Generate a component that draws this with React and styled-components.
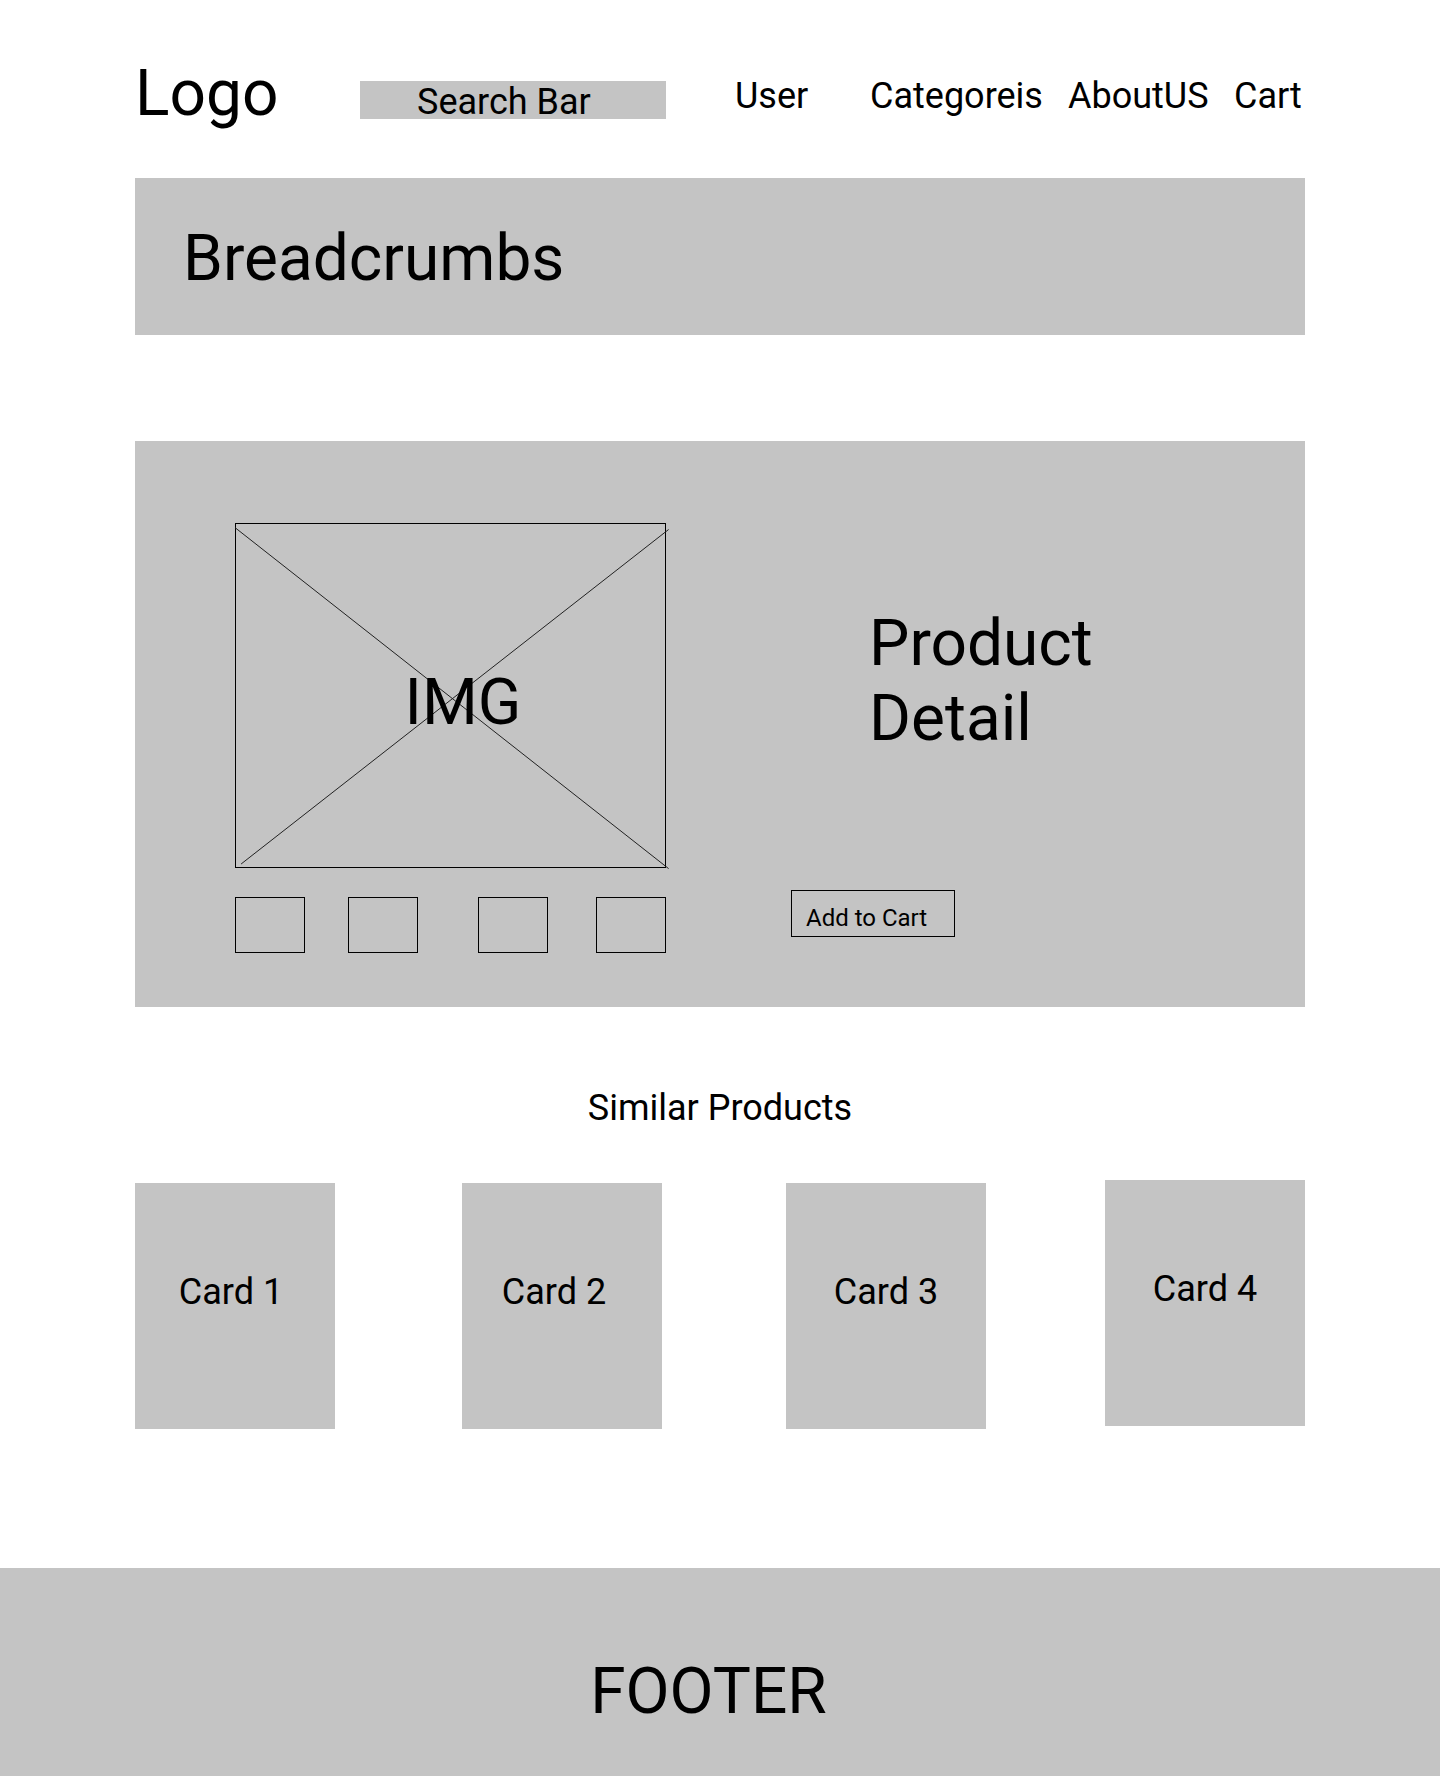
import React from "react";
import styled, { createGlobalStyle } from "styled-components";

const GRAY = "#c4c4c4";

const GlobalStyle = createGlobalStyle`
  html, body { margin: 0; padding: 0; background: #ffffff; }
  body {
    font-family: Roboto, "Liberation Sans", Arial, sans-serif;
    font-weight: 400;
    color: #000000;
  }
  *, *::before, *::after { box-sizing: border-box; }
`;

const Page = styled.div`
  width: 1440px;
  min-height: 1776px;
  display: flex;
  flex-direction: column;
`;

const Container = styled.main`
  width: 1170px;
  margin: 0 auto;
  display: flex;
  flex-direction: column;
`;

const Header = styled.header`
  height: 178px;
  padding-top: 56px;
  display: flex;
  align-items: flex-start;
`;

const Logo = styled.div`
  width: 225px;
  font-size: 64px;
  line-height: 75px;
`;

const SearchBar = styled.div`
  width: 306px;
  height: 38px;
  margin-top: 25px;
  padding-left: 57px;
  background: ${GRAY};
  font-size: 36px;
  line-height: 42px;
  white-space: nowrap;
`;

const Nav = styled.nav`
  margin-left: 69px;
  margin-top: 19px;
  display: grid;
  grid-template-columns: 135px 198px 166px auto;
  font-size: 36px;
  line-height: 42px;
  white-space: nowrap;
`;

const NavLink = styled.span``;

const Breadcrumbs = styled.div`
  height: 157px;
  padding: 43px 0 0 48px;
  background: ${GRAY};
  font-size: 64px;
  line-height: 75px;
`;

const ProductSection = styled.section`
  margin-top: 106px;
  height: 566px;
  padding: 82px 0 0 100px;
  background: ${GRAY};
  display: flex;
  align-items: flex-start;
`;

const Gallery = styled.div`
  width: 431px;
  display: flex;
  flex-direction: column;
`;

const ImageBox = styled.div`
  position: relative;
  width: 431px;
  height: 345px;
  border: 1px solid #000;
  display: flex;
  align-items: center;
  justify-content: center;
  padding: 13px 0 0 25px;
  font-size: 64px;
  line-height: 75px;
`;

const Cross = styled.svg`
  position: absolute;
  left: -1px;
  top: -1px;
  width: 436px;
  height: 347px;
  overflow: visible;
  pointer-events: none;
`;

const ImgLabel = styled.span`
  position: relative;
`;

const Thumbs = styled.div`
  display: flex;
  margin-top: 29px;
`;

const Thumb = styled.div`
  width: 70px;
  height: 56px;
  border: 1px solid #000;
  margin-left: ${(p) => p.$ml}px;
`;

const Info = styled.div`
  margin-left: 125px;
  display: flex;
  flex-direction: column;
  align-items: flex-start;
`;

const Title = styled.h1`
  margin: 83px 0 0 78px;
  width: 260px;
  font-size: 64px;
  line-height: 75px;
  font-weight: 400;
`;

const AddButton = styled.button`
  margin-top: 134px;
  width: 164px;
  height: 47px;
  padding: 8px 0 0 14px;
  border: 1px solid #000;
  background: transparent;
  color: #000;
  font-family: inherit;
  font-size: 24px;
  line-height: 28px;
  text-align: left;
  cursor: pointer;
`;

const SectionTitle = styled.h2`
  margin: 80px 0 0;
  font-size: 36px;
  line-height: 42px;
  font-weight: 400;
  text-align: center;
`;

const CardRow = styled.div`
  margin-top: 54px;
  display: flex;
  align-items: flex-start;
`;

const Card = styled.div`
  width: 200px;
  height: 246px;
  margin-left: ${(p) => p.$ml}px;
  margin-top: ${(p) => (p.$lift ? -3 : 0)}px;
  padding-top: 88px;
  padding-right: ${(p) => p.$pr}px;
  background: ${GRAY};
  text-align: center;
  font-size: 36px;
  line-height: 42px;
`;

const Footer = styled.footer`
  margin-top: 139px;
  height: 208px;
  padding: 86px 23px 0 0;
  background: ${GRAY};
  text-align: center;
  font-size: 64px;
  line-height: 75px;
`;

const thumbs = [0, 43, 60, 48];
const cards = [
  { label: "Card 1", ml: 0, pr: 8 },
  { label: "Card 2", ml: 127, pr: 16 },
  { label: "Card 3", ml: 124, pr: 0 },
  { label: "Card 4", ml: 119, pr: 0, lift: true },
];

export default function App() {
  return (
    <Page>
      <GlobalStyle />
      <Container>
        <Header>
          <Logo>Logo</Logo>
          <SearchBar>Search Bar</SearchBar>
          <Nav>
            <NavLink>User</NavLink>
            <NavLink>Categoreis</NavLink>
            <NavLink>AboutUS</NavLink>
            <NavLink>Cart</NavLink>
          </Nav>
        </Header>

        <Breadcrumbs>Breadcrumbs</Breadcrumbs>

        <ProductSection>
          <Gallery>
            <ImageBox>
              <Cross viewBox="0 0 436 347">
                <line x1="0" y1="4.6" x2="433.6" y2="345.6" stroke="#222" strokeWidth="1" />
                <line x1="6.1" y1="341" x2="433.6" y2="6.5" stroke="#222" strokeWidth="1" />
              </Cross>
              <ImgLabel>IMG</ImgLabel>
            </ImageBox>
            <Thumbs>
              {thumbs.map((ml, i) => (
                <Thumb key={i} $ml={ml} />
              ))}
            </Thumbs>
          </Gallery>
          <Info>
            <Title>Product Detail</Title>
            <AddButton type="button">Add to Cart</AddButton>
          </Info>
        </ProductSection>

        <SectionTitle>Similar Products</SectionTitle>

        <CardRow>
          {cards.map((c) => (
            <Card key={c.label} $ml={c.ml} $pr={c.pr} $lift={c.lift}>
              {c.label}
            </Card>
          ))}
        </CardRow>
      </Container>

      <Footer>FOOTER</Footer>
    </Page>
  );
}
